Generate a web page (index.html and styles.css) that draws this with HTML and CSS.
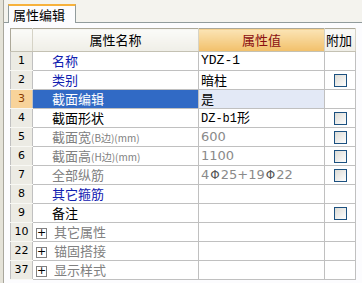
FILE: index.html
```html
<!DOCTYPE html>
<html lang="zh">
<head>
    <meta charset="UTF-8">
    <title>属性编辑</title>
    <link rel="stylesheet" href="styles.css">
</head>
<body>
    <div class="page">
        <div class="side"></div>
        <div class="main">
            <div class="tabs">
                <div class="tab">属性编辑</div>
            </div>
            <div class="panel">
                <table class="grid">
                    <colgroup>
                        <col class="c-num">
                        <col class="c-name">
                        <col class="c-val">
                        <col class="c-add">
                    </colgroup>
                    <thead>
                        <tr>
                            <th class="num"></th>
                            <th>属性名称</th>
                            <th class="hot">属性值</th>
                            <th class="add">附加</th>
                        </tr>
                    </thead>
                    <tbody>
                        <tr>
                            <td class="num">1</td>
                            <td class="name blue">名称</td>
                            <td class="val mono">YDZ-1</td>
                            <td></td>
                        </tr>
                        <tr>
                            <td class="num">2</td>
                            <td class="name blue">类别</td>
                            <td class="val">暗柱</td>
                            <td><span class="check"></span></td>
                        </tr>
                        <tr class="selected">
                            <td class="num">3</td>
                            <td class="name">截面编辑</td>
                            <td class="val">是</td>
                            <td></td>
                        </tr>
                        <tr>
                            <td class="num">4</td>
                            <td class="name">截面形状</td>
                            <td class="val"><span class="mono">DZ-b1</span>形</td>
                            <td><span class="check"></span></td>
                        </tr>
                        <tr>
                            <td class="num">5</td>
                            <td class="name grey">截面宽<small>(B边)(mm)</small></td>
                            <td class="val grey">600</td>
                            <td><span class="check"></span></td>
                        </tr>
                        <tr>
                            <td class="num">6</td>
                            <td class="name grey">截面高<small>(H边)(mm)</small></td>
                            <td class="val grey">1100</td>
                            <td><span class="check"></span></td>
                        </tr>
                        <tr>
                            <td class="num">7</td>
                            <td class="name grey">全部纵筋</td>
                            <td class="val grey">4<span class="bar">Φ</span>25+19<span class="bar">Φ</span>22</td>
                            <td><span class="check"></span></td>
                        </tr>
                        <tr>
                            <td class="num">8</td>
                            <td class="name blue">其它箍筋</td>
                            <td class="val"></td>
                            <td></td>
                        </tr>
                        <tr>
                            <td class="num">9</td>
                            <td class="name">备注</td>
                            <td class="val"></td>
                            <td><span class="check"></span></td>
                        </tr>
                        <tr>
                            <td class="num">10</td>
                            <td class="name grey group"><span class="plus">+</span>其它属性</td>
                            <td class="val"></td>
                            <td></td>
                        </tr>
                        <tr>
                            <td class="num">22</td>
                            <td class="name grey group"><span class="plus">+</span>锚固搭接</td>
                            <td class="val"></td>
                            <td></td>
                        </tr>
                        <tr>
                            <td class="num">37</td>
                            <td class="name grey group"><span class="plus">+</span>显示样式</td>
                            <td class="val"></td>
                            <td></td>
                        </tr>
                    </tbody>
                </table>
            </div>
        </div>
    </div>
</body>
</html>
```

FILE: styles.css
```css
/* XP style property grid */
body {
    margin: 0;
    font-family: "Noto Sans CJK SC", "DejaVu Sans", sans-serif;
    font-size: 12px;
    color: #000;
    background-color: #f4f3ee;
}

.page {
    display: flex;
    height: 283px;
    overflow: hidden;
}

.side {
    width: 3px;
    background-color: #e4e2d8;
    border-right: 1px solid #a8a69c;
}

.main {
    flex: 1;
    display: flex;
    flex-direction: column;
}

.tabs {
    height: 22px;
    display: flex;
    align-items: flex-end;
    padding-left: 4px;
}

.tab {
    width: 62px;
    height: 17px;
    line-height: 17px;
    padding-left: 4px;
    margin-bottom: -1px;
    background-color: #fcfcfe;
    border: 1px solid #919b9c;
    border-top: 2px solid #f7b23d;
    border-bottom: none;
    font-size: 13px;
    position: relative;
}

.panel {
    flex: 1;
    border-top: 1px solid #919b9c;
    background-color: #fcfcfe;
    padding: 5px 0 0 6px;
}

.grid {
    border-collapse: collapse;
    table-layout: fixed;
    width: 346px;
    border: 1px solid #aca899;
    line-height: 16px;
}

.c-num { width: 22px; }
.c-name { width: 166px; }
.c-val { width: 126px; }
.c-add { width: 31px; }

.grid thead tr { height: 23px; }
.grid tbody tr { height: 19px; }

.grid th {
    padding: 0;
    font-weight: normal;
    font-size: 13px;
    background: linear-gradient(#fbfbf8, #efeee7);
    border-right: 1px solid #d6d3c6;
    border-bottom: 1px solid #c4c1b3;
    white-space: nowrap;
    overflow: hidden;
}

.grid th.hot {
    color: #8a0f12;
    background: linear-gradient(#fbe4b5, #f2c06a);
}

.grid th.add {
    text-align: left;
    padding-left: 1px;
}

.grid td {
    padding: 0;
    border: 1px solid #c0c0c0;
    white-space: nowrap;
    overflow: hidden;
    background-color: #fff;
}

.grid td.num {
    text-align: center;
    background-color: #ecebe4;
    border-color: #f8f8f4 #c0c0c0 #f8f8f4 #c0c0c0;
    font-family: "DejaVu Sans", sans-serif;
    font-size: 11px;
}

.grid td.name {
    padding-left: 19px;
    font-size: 13px;
}

.grid td.group {
    padding-left: 3px;
}

.grid td.val {
    padding-left: 2px;
    font-size: 13px;
}

.mono {
    font-family: "Liberation Mono", monospace;
    font-size: 12px;
}

.blue { color: #1020b0; }
.grey { color: #808080; }

.name small {
    font-size: 10px;
}

.val.grey {
    font-family: "DejaVu Sans", sans-serif;
    font-size: 11px;
    color: #8a8a8a;
}

.bar {
    color: #555;
    font-size: 12px;
    padding: 0 1px;
}

.selected td.num {
    background-color: #f8d39a;
    color: #8a3a00;
}

.selected td.name {
    background-color: #316ac5;
    color: #fff;
}

.selected td.val {
    background-color: #e3e9f6;
}

.check {
    display: block;
    width: 11px;
    height: 11px;
    margin-left: 9px;
    border: 1px solid #1c5180;
    background: linear-gradient(135deg, #dcdbd5, #fefefe);
}

.plus {
    display: inline-block;
    width: 9px;
    height: 9px;
    line-height: 8px;
    margin-right: 7px;
    border: 1px solid #808080;
    text-align: center;
    font-family: "DejaVu Sans", sans-serif;
    font-size: 11px;
    color: #000;
    vertical-align: 1px;
}
```
